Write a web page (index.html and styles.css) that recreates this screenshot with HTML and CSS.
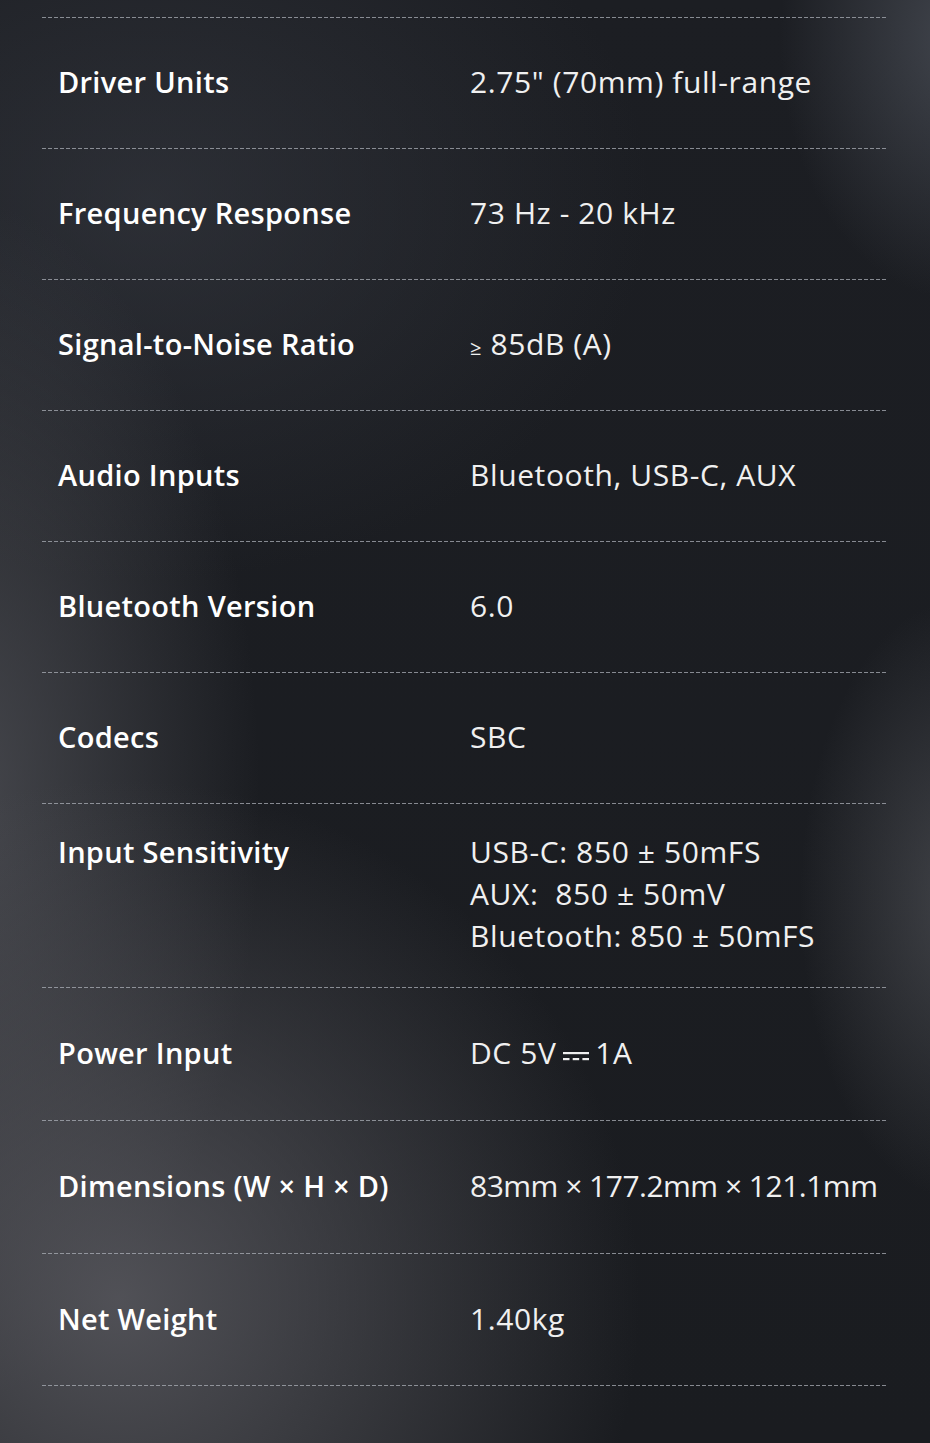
FILE: index.html
```html
<!DOCTYPE html>
<html lang="en">
<head>
<meta charset="utf-8">
<title>Specifications</title>
<link rel="stylesheet" href="styles.css">
</head>
<body>
<main class="specs">
  <div class="row"><div class="label">Driver Units</div><div class="value">2.75" (70mm) full-range</div></div>
  <div class="row"><div class="label">Frequency Response</div><div class="value">73 Hz - 20 kHz</div></div>
  <div class="row"><div class="label">Signal-to-Noise Ratio</div><div class="value"><span class="ge">≥</span> 85dB (A)</div></div>
  <div class="row"><div class="label">Audio Inputs</div><div class="value">Bluetooth, USB-C, AUX</div></div>
  <div class="row"><div class="label">Bluetooth Version</div><div class="value">6.0</div></div>
  <div class="row"><div class="label">Codecs</div><div class="value">SBC</div></div>
  <div class="row row--multi"><div class="label">Input Sensitivity</div><div class="value">USB-C: 850 ± 50mFS<br>AUX:&nbsp; 850 ± 50mV<br>Bluetooth: 850 ± 50mFS</div></div>
  <div class="row row--tall"><div class="label">Power Input</div><div class="value">DC 5V <svg class="dc" viewBox="0 0 26 12" width="26" height="12" aria-hidden="true"><rect x="0" y="2" width="26" height="2.2" fill="currentColor"/><rect x="0" y="8" width="6.5" height="2.2" fill="currentColor"/><rect x="9.7" y="8" width="6.5" height="2.2" fill="currentColor"/><rect x="19.4" y="8" width="6.6" height="2.2" fill="currentColor"/></svg> 1A</div></div>
  <div class="row row--tall"><div class="label">Dimensions (W × H × D)</div><div class="value value--tight">83mm × 177.2mm × 121.1mm</div></div>
  <div class="row row--tall row--last"><div class="label">Net Weight</div><div class="value">1.40kg</div></div>
</main>
</body>
</html>
```
FILE: styles.css
```css
html, body {
  margin: 0;
  padding: 0;
}
body {
  width: 930px;
  min-height: 1443px;
  background-color: #17191d;
  background-image:
    radial-gradient(ellipse 180px 260px at 960px 40px, rgba(95,100,110,0.55), rgba(95,100,110,0) 100%),
    radial-gradient(ellipse 160px 300px at 960px 900px, rgba(110,112,118,0.45), rgba(110,112,118,0) 100%),
    radial-gradient(ellipse 520px 520px at 120px 1300px, rgba(90,90,96,0.85), rgba(90,90,96,0) 100%),
    radial-gradient(ellipse 300px 600px at -40px 800px, rgba(85,86,92,0.75), rgba(85,86,92,0) 100%),
    radial-gradient(ellipse 500px 380px at 150px 200px, rgba(55,58,66,0.6), rgba(55,58,66,0) 100%),
    linear-gradient(180deg, #1c1e23 0%, #1a1c20 100%);
  font-family: "Open Sans", "Noto Sans", sans-serif;
  color: #fff;
}
.specs {
  padding: 17px 43px 55px 42px;
  display: flex;
  flex-direction: column;
}
.row {
  display: grid;
  grid-template-columns: 412px 1fr;
  padding: 44px 0 45px 16px;
  line-height: 42px;
  background-image: linear-gradient(90deg, rgba(170,174,182,0.75) 0 4px, transparent 4px 6px);
  background-size: 6px 1px;
  background-repeat: repeat-x;
  background-position: 0 0;
}
.row--multi {
  padding: 28px 0 30px 16px;
}
.row--tall {
  padding: 45px 0 46px 16px;
}
.row--last {
  background-image:
    linear-gradient(90deg, rgba(170,174,182,0.75) 0 4px, transparent 4px 6px),
    linear-gradient(90deg, rgba(170,174,182,0.75) 0 4px, transparent 4px 6px);
  background-size: 6px 1px, 6px 1px;
  background-position: 0 0, 0 100%;
  background-repeat: repeat-x, repeat-x;
}
.label {
  font-size: 29px;
  font-weight: 600;
  letter-spacing: 0.3px;
  color: #ffffff;
}
.value {
  font-size: 30px;
  font-weight: 400;
  letter-spacing: 0.6px;
  color: #f0f0f0;
}
.value--tight {
  letter-spacing: -0.5px;
}
.ge {
  font-size: 20px;
  line-height: 0;
}
.dc {
  vertical-align: 2px;
  margin: 0 -2px;
}
```
